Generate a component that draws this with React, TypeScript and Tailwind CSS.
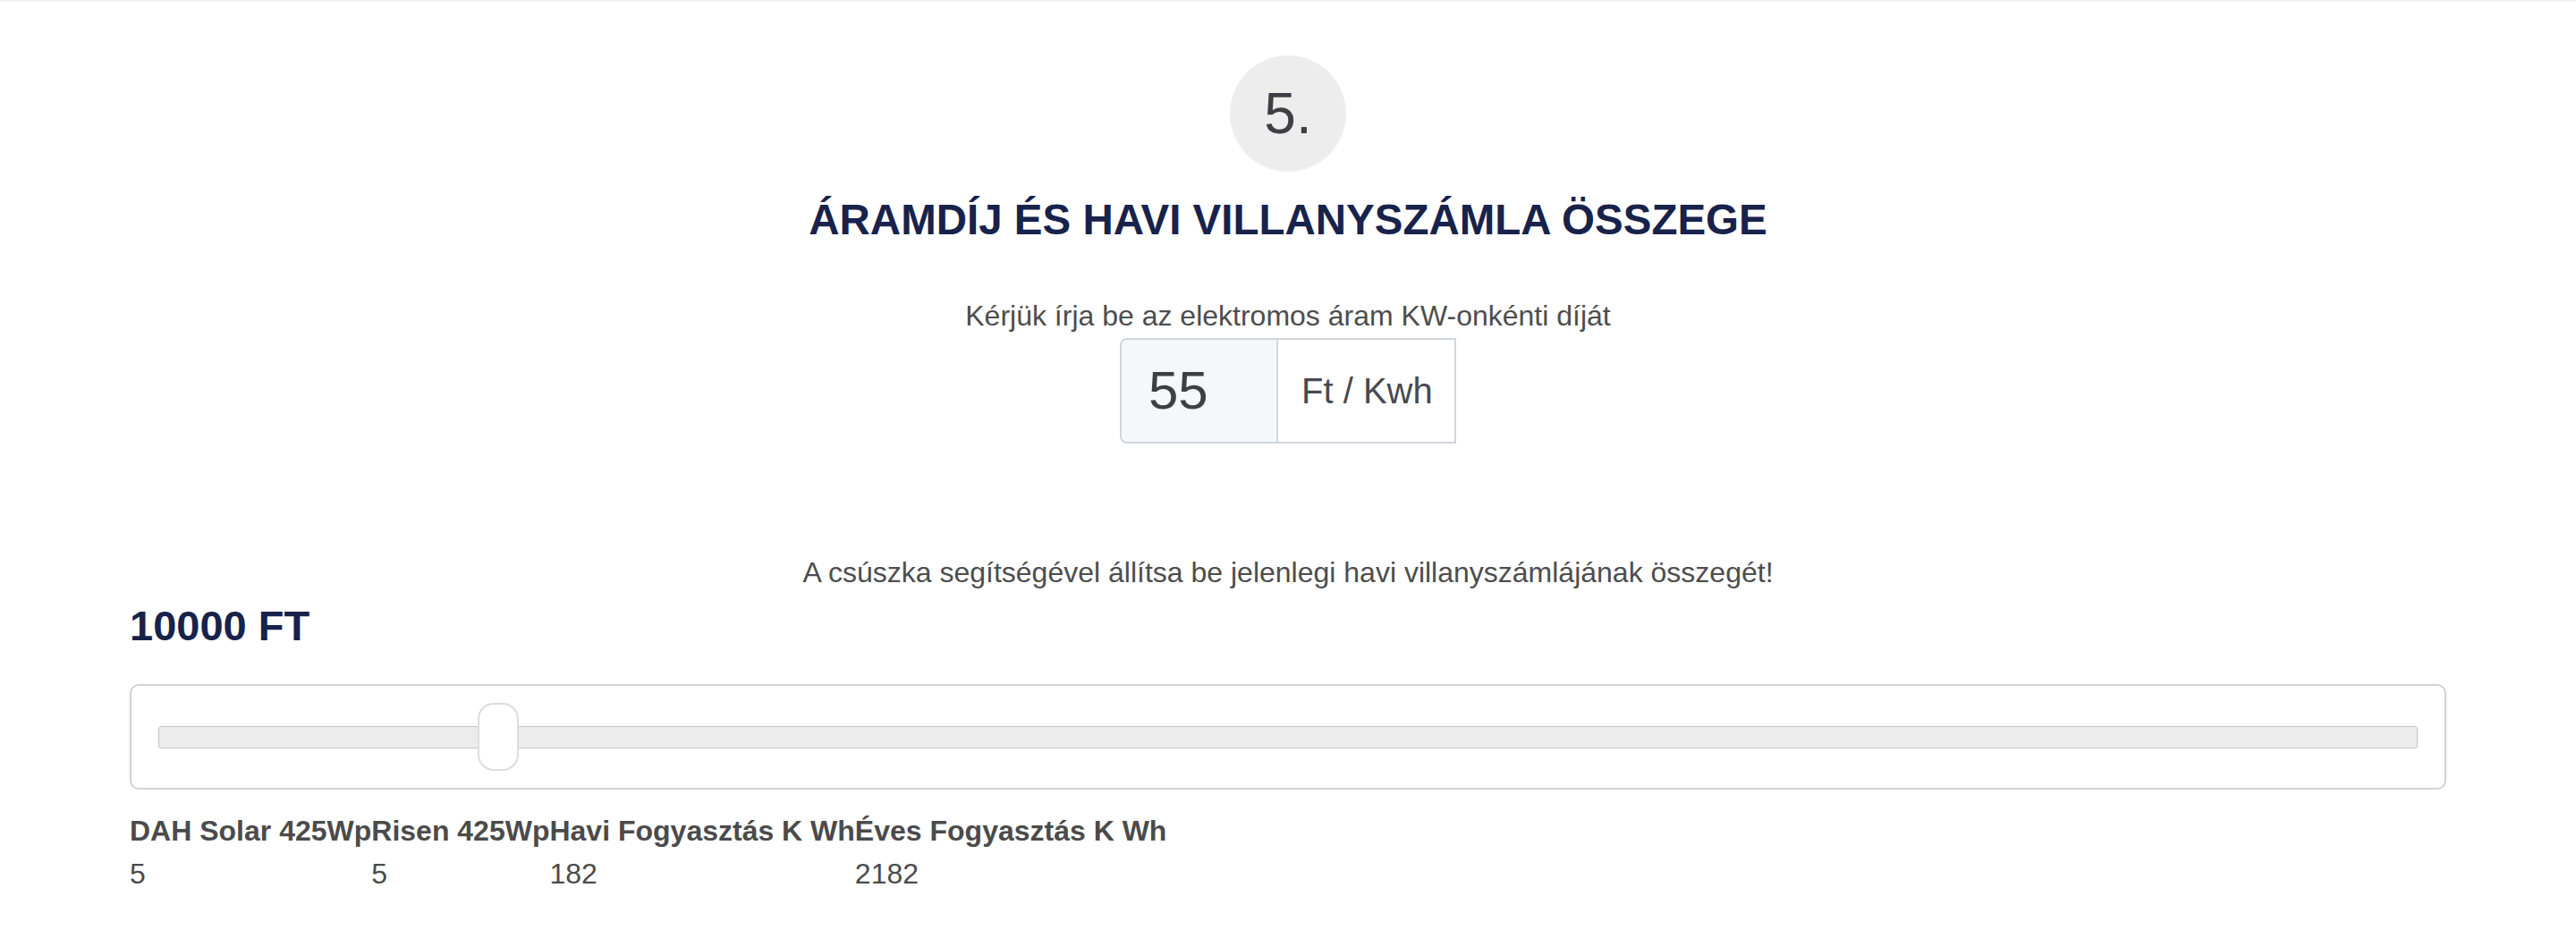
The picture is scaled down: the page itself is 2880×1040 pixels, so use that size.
import React from "react";

const rows = [
  { h: "DAH Solar 425Wp", v: "5" },
  { h: "Risen 425Wp", v: "5" },
  { h: "Havi Fogyasztás K Wh", v: "182" },
  { h: "Éves Fogyasztás K Wh", v: "2182" },
];

export default function App() {
  const pct = 15;
  return (
    <div
      className="min-h-[1040px] w-full bg-white border-t-2 border-[#f2f2f2] text-[#4d4d4d]"
      style={{ fontFamily: '"Liberation Sans", Arial, Helvetica, sans-serif' }}
    >
      <div className="flex flex-col items-center pt-[60px]">
        <div className="flex h-[130px] w-[130px] items-center justify-center rounded-full bg-[#ededed] text-[64px] leading-none text-[#3e4046]">
          5.
        </div>
        <h2 className="mt-[27px] text-[47.5px] font-bold leading-[54px] text-[#18224b]">
          ÁRAMDÍJ ÉS HAVI VILLANYSZÁMLA ÖSSZEGE
        </h2>
        <p className="mt-[62px] text-[32px] leading-[36px] text-[#4d4d4d]">
          Kérjük írja be az elektromos áram KW-onkénti díját
        </p>
        <div className="mt-[7px] flex h-[118px]">
          <div className="flex w-[177px] items-center rounded-l-[8px] border-2 border-[#cfd6dd] bg-[#f5f7f9] pl-[30px] text-[60px] text-[#3c3f44]">
            55
          </div>
          <div className="flex w-[199px] items-center border-2 border-l-0 border-[#cfd6dd] bg-white pl-[26px] text-[40px] text-[#474a4f]">
            Ft / Kwh
          </div>
        </div>
        <p className="mt-[126px] text-[32px] leading-[36px] text-[#4d4d4d]">
          A csúszka segítségével állítsa be jelenlegi havi villanyszámlájának összegét!
        </p>
      </div>

      <div className="px-[145px]">
        <div className="mt-[15px] text-[47px] font-bold leading-[54px] text-[#18224b]">10000 FT</div>
        <div className="mt-[38px] flex h-[118px] items-center rounded-[10px] border-2 border-[#cdd3d8] px-[30px]">
          <div className="relative h-[25px] w-full rounded-[3px] border border-[#c6c6c6] bg-[#ececec]">
            <div
              className="absolute top-1/2 h-[76px] w-[46px] -translate-x-1/2 -translate-y-1/2 rounded-[18px] border-2 border-[#dcdcdc] bg-white"
              style={{ left: `${pct}%` }}
            />
          </div>
        </div>

        <table className="mt-[22px] border-collapse text-[32px] text-[#4b4b4b]">
          <thead>
            <tr>
              {rows.map((r) => (
                <th key={r.h} className="p-0 text-left font-bold leading-[48px] whitespace-nowrap">
                  {r.h}
                </th>
              ))}
            </tr>
          </thead>
          <tbody>
            <tr>
              {rows.map((r) => (
                <td key={r.h} className="p-0 text-left font-normal leading-[48px]">
                  {r.v}
                </td>
              ))}
            </tr>
          </tbody>
        </table>
      </div>
    </div>
  );
}
